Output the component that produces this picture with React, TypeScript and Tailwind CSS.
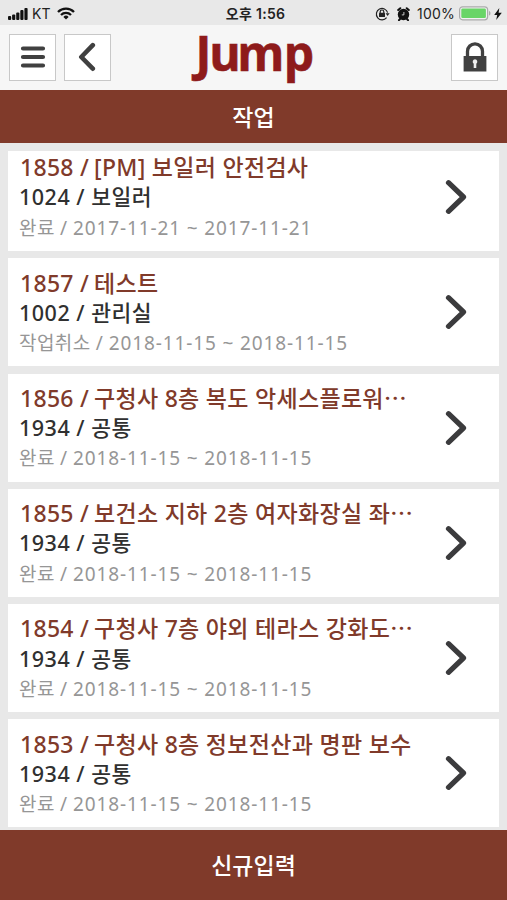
import type { ReactNode } from 'react';

const jobs = [
  { id: 1858, title: '[PM] 보일러 안전검사', place: '1024 / 보일러', status: '완료', date: '2017-11-21' },
  { id: 1857, title: '테스트', place: '1002 / 관리실', status: '작업취소', date: '2018-11-15' },
  { id: 1856, title: '구청사 8층 복도 악세스플로워⋯', place: '1934 / 공통', status: '완료', date: '2018-11-15' },
  { id: 1855, title: '보건소 지하 2층 여자화장실 좌⋯', place: '1934 / 공통', status: '완료', date: '2018-11-15' },
  { id: 1854, title: '구청사 7층 야외 테라스 강화도⋯', place: '1934 / 공통', status: '완료', date: '2018-11-15' },
  { id: 1853, title: '구청사 8층 정보전산과 명판 보수', place: '1934 / 공통', status: '완료', date: '2018-11-15' },
];

function StatusBar() {
  return (
    <div className="grid h-[25px] shrink-0 grid-cols-[1fr_auto_1fr] items-center bg-[#e8e8e8] pt-[2px] pl-2 pr-[5px] font-['Inter','Noto_Sans_CJK_KR',sans-serif] text-[14px] leading-none text-[#222]">
      <div className="flex items-center">
        <svg width="20" height="14" viewBox="0 0 20 14" fill="#111">
          <rect x="0" y="9" width="3.2" height="4" rx="1" />
          <rect x="4.1" y="7.5" width="3.2" height="5.5" rx="1" />
          <rect x="8.2" y="5.5" width="3.2" height="7.5" rx="1" />
          <rect x="12.3" y="3" width="3.2" height="10" rx="1" />
          <rect x="16.4" y="1" width="3.2" height="12" rx="1" />
        </svg>
        <span className="ml-1">KT</span>
        <svg className="ml-[7px]" width="18" height="13" viewBox="0 0 18 13" fill="none" stroke="#111" strokeWidth="2.3">
          <path d="M1 5a11.3 11.3 0 0 1 16 0" />
          <path d="M4 8a7 7 0 0 1 10 0" />
          <path d="M9 12.5 6.4 9.9a3.7 3.7 0 0 1 5.2 0z" fill="#111" stroke="none" />
        </svg>
      </div>
      <span className="pl-px font-semibold tracking-[0.3px]">오후 1:56</span>
      <div className="flex items-center justify-end">
        <svg width="15" height="14" viewBox="0 0 15 14" fill="none" stroke="#222" strokeWidth="1.2">
          <path d="M11.6 10.6a5.7 5.7 0 1 1 1-4.9" />
          <path d="M10.6 6.2h4l-2 2.8z" fill="#222" stroke="none" />
          <path d="M5.2 6V4.8a1.8 1.8 0 0 1 3.6 0V6" />
          <rect x="4" y="5.8" width="6" height="4.2" rx=".5" fill="#222" stroke="none" />
        </svg>
        <svg className="ml-[7px]" width="13" height="14" viewBox="0 0 13 14">
          <path d="M1.2 3 3.3 1.2M11.8 3 9.7 1.2M3 12l-1 1.2M10 12l1 1.2" stroke="#111" strokeWidth="2" strokeLinecap="round" />
          <circle cx="6.5" cy="7.5" r="5.7" fill="#111" />
          <path d="M6.9 5v2.9H4.8" fill="none" stroke="#d8d8d8" strokeWidth=".9" />
        </svg>
        <span className="ml-[7px] tracking-[0.2px]">100%</span>
        <svg className="ml-1" width="32" height="15" viewBox="0 0 32 15">
          <rect x=".6" y=".8" width="28" height="13" rx="3" fill="#f2f2f2" stroke="#aaa" strokeWidth="1.2" />
          <rect x="2.3" y="2.5" width="24.6" height="9.6" rx="1.3" fill="#69d567" />
          <path d="M30 5v4.6c2-.7 2-3.9 0-4.6z" fill="#aaa" />
        </svg>
        <svg className="ml-[3px]" width="8" height="12" viewBox="0 0 8 12" fill="#111">
          <path d="M5.3 0 .2 7h3L2.2 12 7.8 4.7H4.6z" />
        </svg>
      </div>
    </div>
  );
}

function HeaderButton({ label, children }: { label: string; children: ReactNode }) {
  return (
    <button aria-label={label} className="flex size-[47px] items-center justify-center border border-[#c8c8c8] bg-white">
      {children}
    </button>
  );
}

function Header() {
  return (
    <header className="grid h-[65px] shrink-0 grid-cols-[1fr_118px_1fr] items-center bg-[#f6f6f6] px-[9px]">
      <div className="flex gap-2 pb-px">
        <HeaderButton label="메뉴">
          <svg width="26" height="24" viewBox="0 0 26 24" stroke="#404040" strokeWidth="4.2" strokeLinecap="round">
            <path d="M3 3.5h20M3 12h20M3 20.5h20" />
          </svg>
        </HeaderButton>
        <HeaderButton label="뒤로">
          <svg width="20" height="30" viewBox="0 0 20 30" fill="none" stroke="#404040" strokeWidth="4.6" strokeLinecap="round" strokeLinejoin="round">
            <path d="M14.8 3.2 3.3 15l11.5 11.7" />
          </svg>
        </HeaderButton>
      </div>
      <svg width="118" height="64" viewBox="0 0 118 64" className="overflow-visible">
        <text x="0.5 14.3 42.3 88.7" y="45" fill="#8e1b1b" stroke="#8e1b1b" strokeWidth=".6" className="font-['Open_Sans',sans-serif] text-[48px] leading-none font-bold">Jump</text>
      </svg>
      <div className="flex justify-end pb-px">
        <HeaderButton label="잠금">
          <svg width="24" height="30" viewBox="0 0 24 30">
            <path d="M4.5 15V9.3a7.5 7.5 0 0 1 15 0V15" fill="none" stroke="#404040" strokeWidth="3.3" />
            <path d="M.6 14h22.8v15.5H.6z" fill="#404040" />
            <path d="M12 17.2a2.5 2.5 0 0 0-1.3 4.5V26h2.6v-4.3a2.5 2.5 0 0 0-1.3-4.5z" fill="#eee" />
          </svg>
        </HeaderButton>
      </div>
    </header>
  );
}

function JobCard({ job }: { job: (typeof jobs)[number] }) {
  return (
    <li className="flex h-[108px] shrink-0 items-center justify-between bg-white pl-[11px] pr-8 first:h-[100px] first:pb-2">
      <div className="whitespace-nowrap pt-[2px]">
        <p className="flex h-[30px] items-center pl-px text-[23px] font-medium tracking-[0.3px] text-[#803a2a]">
          <span className="w-[74px]">{job.id} /</span>
          <span>{job.title}</span>
        </p>
        <p className="flex h-[30px] items-center text-[21.5px] font-medium tracking-[0.5px] text-[#303030]">{job.place}</p>
        <p className="flex h-[31px] items-center text-[19px] text-[#969696]">
          <span className="tracking-[0.4px]">{job.status} /&nbsp;</span>
          <span className="tracking-[0.88px]">{job.date} ~ {job.date}</span>
        </p>
      </div>
      <svg width="22" height="36" viewBox="0 0 22 36" fill="none" stroke="#3b3b3d" strokeWidth="5.2" strokeLinecap="round" strokeLinejoin="round">
        <path d="M3.5 3.7 18.5 18l-15 14.3" />
      </svg>
    </li>
  );
}

export default function App() {
  return (
    <div className="flex h-[900px] w-[507px] flex-col overflow-hidden bg-[#e8e8e8] font-['Noto_Sans','Noto_Sans_CJK_KR',sans-serif]">
      <StatusBar />
      <Header />
      <h1 className="flex h-[53px] shrink-0 items-center justify-center bg-[#803a2a] pt-[2px] text-[23px] font-medium text-white">작업</h1>
      <ul className="flex min-h-0 flex-1 flex-col gap-[7.3px] overflow-hidden px-2 pt-2">
        {jobs.map((job) => (
          <JobCard key={job.id} job={job} />
        ))}
      </ul>
      <button className="h-[70px] shrink-0 bg-[#803a2a] pt-px text-[23px] font-medium text-white">신규입력</button>
    </div>
  );
}
